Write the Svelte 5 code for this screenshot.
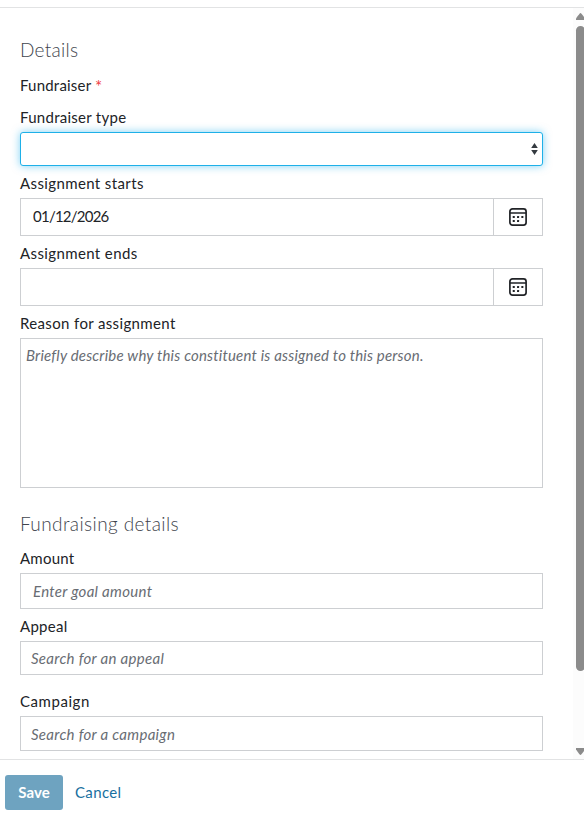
<script>
  let fundraiserType = $state('');
  let starts = $state('01/12/2026');
  let ends = $state('');
  let reason = $state('');
</script>

{#snippet calendar()}
  <svg width="18" height="18" viewBox="0 0 18 18" fill="none" aria-hidden="true">
    <rect x="0.9" y="0.9" width="16.2" height="16.2" rx="2.6" stroke="#212327" stroke-width="1.7" />
    <path d="M1 5H17" stroke="#212327" stroke-width="1.5" />
    <g fill="#212327">
      <rect x="3.7" y="8" width="2.1" height="2.1" rx=".5" /><rect x="8" y="8" width="2.1" height="2.1" rx=".5" /><rect x="12.3" y="8" width="2.1" height="2.1" rx=".5" />
      <rect x="3.7" y="12" width="2.1" height="2.1" rx=".5" /><rect x="8" y="12" width="2.1" height="2.1" rx=".5" />
    </g>
  </svg>
{/snippet}

<div class="modal">
  <div class="body">
    <form class="content">
      <h2 class="details">Details</h2>
      <div class="label fundraiser">Fundraiser <span class="required">*</span></div>

      <label class="label" for="type">Fundraiser type</label>
      <div class="select-wrap">
        <select id="type" bind:value={fundraiserType}><option value=""></option></select>
        <svg class="arrows" width="7" height="12" viewBox="0 0 7 12" aria-hidden="true"><path d="M3.5 0L6.8 5H.2ZM.2 7H6.8L3.5 12Z" fill="#343a40" /></svg>
      </div>

      <label class="label starts" for="starts">Assignment starts</label>
      <div class="date">
        <input id="starts" class="value" bind:value={starts} />
        <button type="button" aria-label="Choose start date">{@render calendar()}</button>
      </div>

      <label class="label ends" for="ends">Assignment ends</label>
      <div class="date">
        <input id="ends" bind:value={ends} />
        <button type="button" aria-label="Choose end date">{@render calendar()}</button>
      </div>

      <label class="label reason" for="reason">Reason for assignment</label>
      <textarea id="reason" bind:value={reason} placeholder="Briefly describe why this constituent is assigned to this person."></textarea>

      <h2 class="fundraising">Fundraising details</h2>
      <label class="label amount-label" for="amount">Amount</label>
      <input id="amount" class="box amount" placeholder="Enter goal amount" />
      <label class="label appeal-label" for="appeal">Appeal</label>
      <input id="appeal" class="box appeal" placeholder="Search for an appeal" />
      <label class="label campaign-label" for="campaign">Campaign</label>
      <input id="campaign" class="box campaign" placeholder="Search for a campaign" />
    </form>
    <div class="scrollbar">
      <svg width="9" height="7" viewBox="0 0 9 7"><path d="M4.5 0Q5.2 0 9 5.5V7H0V5.5Q3.8 0 4.5 0Z" fill="#8b8b8b" /></svg>
      <div class="thumb"></div>
      <svg class="down" width="9" height="7" viewBox="0 0 9 7"><path d="M4.5 7Q5.2 7 9 1.5V0H0V1.5Q3.8 7 4.5 7Z" fill="#8b8b8b" /></svg>
    </div>
  </div>
  <footer>
    <button class="save">Save</button>
    <button class="cancel">Cancel</button>
  </footer>
</div>

<style>
  :global(body) { margin: 0; background: #fff; }
  .modal, .modal * { box-sizing: border-box; }
  .modal {
    width: 584px; height: 820px; padding-top: 7px; overflow: hidden;
    display: flex; flex-direction: column; background: #fff;
    font-family: Lato, "Open Sans", sans-serif; font-size: 15px; color: #212327;
  }
  .body { display: flex; height: 753px; border-top: 1px solid #e2e3e4; border-bottom: 1px solid #e2e3e4; }
  .content { width: 573px; padding: 30px 30px 0 20px; display: flex; flex-direction: column; }
  h2 { margin: 0 0 14px; height: 24px; line-height: 23px; font-size: 19px; font-weight: 300; letter-spacing: .4px; color: #41454d; white-space: nowrap; }
  h2.details { letter-spacing: .3px; }
  h2.fundraising { margin: 24px 0 13px; }
  .label { height: 20px; line-height: 19px; margin: 8px 0 4px; letter-spacing: .27px; white-space: nowrap; }
  .label.fundraiser { margin: 0 0 4px; letter-spacing: .2px; }
  .label.starts, .label.ends { letter-spacing: .38px; }
  .label.reason { letter-spacing: .36px; }
  .label.amount-label { margin-top: 0; letter-spacing: .25px; }
  .label.campaign-label { margin-top: 17px; letter-spacing: .55px; }
  .required { color: #ef4044; font-size: 17px; line-height: 1; position: relative; top: 2px; }
  input, textarea, select, button { font: inherit; color: inherit; margin: 0; border-radius: 0; outline: none; background: #fff; }
  input, textarea { border: 1px solid #cdcfd2; letter-spacing: .3px; }
  ::placeholder { color: #686c73; font-style: italic; opacity: 1; }
  .select-wrap { position: relative; height: 34px; }
  select { width: 100%; height: 34px; display: block; appearance: none; border: 1px solid #1eb0e8; border-radius: 3px; box-shadow: 0 0 8px rgba(0, 166, 235, .5); }
  .arrows { position: absolute; right: 5px; top: 11px; pointer-events: none; }
  .date { display: flex; height: 38px; }
  .date input { width: 474px; padding: 0 12px 2px; }
  .date .value { letter-spacing: -.76px; }
  .date button { width: 49px; border: 1px solid #cdcfd2; border-left: 0; padding: 0; display: flex; align-items: center; justify-content: center; }
  textarea { height: 150px; padding: 6px 5px; line-height: 20px; letter-spacing: .19px; resize: none; overflow: hidden; display: block; }
  .box { padding: 0 10px; }
  .amount { height: 36px; padding: 0 12px 1px; }
  .appeal { height: 34px; }
  .campaign { height: 35px; }
  .scrollbar { width: 11px; padding: 5px 0 4px 3px; display: flex; flex-direction: column; background: #fcfcfc; overflow: hidden; }
  .scrollbar svg { display: block; flex: none; width: 9px; }
  .thumb { width: 9px; height: 645px; margin-top: 6px; border-radius: 5px; background: #8b8b8b; flex: none; }
  .down { margin-top: auto; }
  footer { display: flex; align-items: center; padding: 15px 5px 0; }
  footer button { height: 35px; border: 0; padding: 0 0 1px; white-space: nowrap; }
  .save { width: 58px; border-radius: 3px; background: #6ea3c0; color: #fff; font-weight: 700; letter-spacing: .1px; }
  .cancel { margin-left: 12px; background: transparent; color: #1870a0; letter-spacing: .35px; }
</style>
